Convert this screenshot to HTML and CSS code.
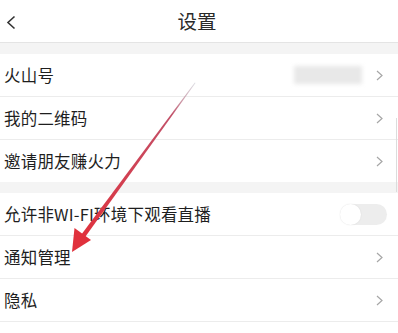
FILE: index.html
```html
<!DOCTYPE html>
<html lang="zh">
<head>
<meta charset="utf-8">
<link rel="stylesheet" href="styles.css">
</head>
<body>
<div class="page">
  <header class="topbar">
    <svg class="back" width="11" height="15" viewBox="0 0 11 15"><path d="M8.5 1.5 L2 7.5 L8.5 13.5" fill="none" stroke="#333" stroke-width="1.6"/></svg>
    <h1 class="title">设置</h1>
  </header>
  <div class="gap gap-top"></div>
  <section class="group">
    <div class="row">
      <span class="label">火山号</span>
      <span class="right"><span class="blur"></span><svg class="chev" width="7" height="11" viewBox="0 0 7 11"><path d="M1 1 L6 5.5 L1 10" fill="none" stroke="#a6a6a6" stroke-width="1.2"/></svg></span>
    </div>
    <div class="row">
      <span class="label">我的二维码</span>
      <span class="right"><svg class="chev" width="7" height="11" viewBox="0 0 7 11"><path d="M1 1 L6 5.5 L1 10" fill="none" stroke="#a6a6a6" stroke-width="1.2"/></svg></span>
    </div>
    <div class="row last">
      <span class="label">邀请朋友赚火力</span>
      <span class="right"><svg class="chev" width="7" height="11" viewBox="0 0 7 11"><path d="M1 1 L6 5.5 L1 10" fill="none" stroke="#a6a6a6" stroke-width="1.2"/></svg></span>
    </div>
  </section>
  <div class="gap gap-mid"></div>
  <section class="group">
    <div class="row tall">
      <span class="label">允许非WI-FI环境下观看直播</span>
      <span class="toggle"><span class="knob"></span></span>
    </div>
    <div class="row">
      <span class="label">通知管理</span>
      <span class="right"><svg class="chev" width="7" height="11" viewBox="0 0 7 11"><path d="M1 1 L6 5.5 L1 10" fill="none" stroke="#a6a6a6" stroke-width="1.2"/></svg></span>
    </div>
    <div class="row">
      <span class="label">隐私</span>
      <span class="right"><svg class="chev" width="7" height="11" viewBox="0 0 7 11"><path d="M1 1 L6 5.5 L1 10" fill="none" stroke="#a6a6a6" stroke-width="1.2"/></svg></span>
    </div>
  </section>
  <svg class="overlay" width="398" height="333" viewBox="0 0 398 333">
    <defs>
      <linearGradient id="g" x1="195" y1="83" x2="80" y2="240" gradientUnits="userSpaceOnUse">
        <stop offset="0" stop-color="#b9b9c4" stop-opacity="0.5"/>
        <stop offset="0.2" stop-color="#c25068"/>
        <stop offset="1" stop-color="#e0313c"/>
      </linearGradient>
    </defs>
    <polygon points="195.5,83 194.8,82.6 81,235 84.8,237.6" fill="url(#g)"/>
    <polygon points="72,252 74.5,228 91,240" fill="#e0313c"/>
    <line x1="396.5" y1="118" x2="396.5" y2="192" stroke="#dcdcdc" stroke-width="1"/>
  </svg>
</div>
</body>
</html>
```

FILE: styles.css
```css
* { box-sizing: border-box; margin: 0; padding: 0; }
html, body { background: #fff; }
body {
  font-family: "Noto Sans CJK SC", "Noto Sans", sans-serif;
  color: #222;
}
.page {
  position: relative;
  width: 398px;
  height: 333px;
  overflow: hidden;
}
.topbar {
  height: 43px;
  border-bottom: 1px solid #e4e4e4;
  display: flex;
  align-items: center;
  justify-content: center;
  position: relative;
}
.back {
  position: absolute;
  left: 6px;
  top: 15px;
}
.title {
  font-size: 19.5px;
  font-weight: 400;
  color: #2a2a2a;
  line-height: 1;
  margin-left: -4px;
}
.gap { background: #f4f4f4; }
.gap-top { height: 11px; }
.gap-mid { height: 11px; }
.group { background: #fff; }
.row {
  height: 43px;
  border-bottom: 1px solid #ececec;
  display: flex;
  align-items: center;
  justify-content: space-between;
  padding: 0 15px 0 4px;
}
.row.last { border-bottom: none; height: 42px; }
.row.tall { height: 43px; padding-right: 11px; }
.label {
  font-size: 16.5px;
  line-height: 1;
  color: #1e1e1e;
  letter-spacing: 0.2px;
}
.right {
  display: flex;
  align-items: center;
  gap: 14px;
}
.chev { display: block; }
.blur {
  display: block;
  width: 68px;
  height: 18px;
  background: #e8e8e8;
  filter: blur(2px);
}
.toggle {
  position: relative;
  width: 47px;
  height: 21px;
  border-radius: 11px;
  background: #ededed;
  display: flex;
  align-items: center;
}
.knob {
  width: 21px;
  height: 21px;
  border-radius: 50%;
  background: #fff;
  box-shadow: 0 0 2px rgba(0,0,0,0.08);
}
.overlay {
  position: absolute;
  left: 0;
  top: 0;
  pointer-events: none;
}
```
